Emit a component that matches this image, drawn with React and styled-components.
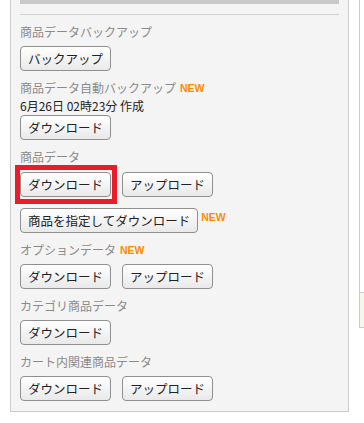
import React from 'react';
import styled, { createGlobalStyle } from 'styled-components';

const GlobalStyle = createGlobalStyle`
  body {
    margin: 0;
    background: #fff;
    font-family: "Noto Sans CJK JP", "Noto Sans", sans-serif;
  }
`;

const Page = styled.div`
  display: flex;
  align-items: flex-start;
  height: 423px;
  overflow: hidden;
`;

const Panel = styled.div`
  margin-left: 10px;
  width: 319px;
  background: #f4f4f4;
  border: 1px solid #cbcbcb;
  border-top: none;
  padding: 0 9px 10px;
`;

const TopBar = styled.div`
  height: 4px;
  background: #c9c9c9;
`;

const Rule = styled.div`
  height: 1px;
  background: #cfcfcf;
  margin-top: 10px;
`;

const Section = styled.div`
  margin-top: 8px;
  margin-bottom: ${(p) => p.$extra || '0'};
`;

const Label = styled.div`
  font-size: 12px;
  line-height: 18px;
  color: #8a8a8a;
  display: flex;
  align-items: center;
  gap: 4px;
`;

const New = styled.span`
  font-family: "Liberation Sans Narrow", "Liberation Sans", Arial, sans-serif;
  font-weight: bold;
  font-size: 10.5px;
  color: #ff8a00;
  line-height: 1;
`;

const Info = styled.div`
  font-size: 12px;
  line-height: 18px;
  color: #222;
`;

const Row = styled.div`
  display: flex;
  align-items: flex-start;
  gap: 11px;
  margin-top: ${(p) => p.$gap || '5px'};
`;

const Button = styled.button`
  height: 25px;
  padding: 0 7px;
  font-family: "Noto Sans CJK JP", sans-serif;
  font-size: 12.5px;
  line-height: 23px;
  color: #222;
  border: 1px solid #8f8f8f;
  border-radius: 4px;
  background: linear-gradient(#ffffff, #e9e9e9);
  cursor: pointer;
`;

const Marked = styled.span`
  position: relative;
  display: inline-flex;

  &::after {
    content: '';
    position: absolute;
    left: -5px;
    top: -7px;
    right: -6px;
    bottom: -7px;
    border: 5px solid #ea1c2a;
    pointer-events: none;
  }
`;

const WithBadge = styled.span`
  display: inline-flex;
  align-items: flex-start;
  gap: 3px;
`;

const BadgeNew = styled(New)`
  margin-top: 4px;
`;

const Side = styled.div`
  margin-left: 10px;
  flex: 1;
  height: 328px;
  border-left: 1px solid #cbcbcb;
  display: flex;
  flex-direction: column;
  justify-content: flex-end;
`;

const SideBox = styled.div`
  height: 34px;
  background: #f6f6e9;
  border-top: 1px solid #cbcbcb;
  border-bottom: 1px solid #cbcbcb;
`;

export default function App() {
  return (
    <Page>
      <GlobalStyle />
      <Panel>
        <TopBar />
        <Rule />
        <Section>
          <Label>商品データバックアップ</Label>
          <Row>
            <Button>バックアップ</Button>
          </Row>
        </Section>
        <Section>
          <Label>
            商品データ自動バックアップ<New>NEW</New>
          </Label>
          <Info>6月26日 02時23分 作成</Info>
          <Row $gap="0px">
            <Button>ダウンロード</Button>
          </Row>
        </Section>
        <Section $extra="2px">
          <Label>商品データ</Label>
          <Row $gap="6px">
            <Marked>
              <Button>ダウンロード</Button>
            </Marked>
            <Button>アップロード</Button>
          </Row>
          <Row $gap="11px">
            <WithBadge>
              <Button>商品を指定してダウンロード</Button>
              <BadgeNew>NEW</BadgeNew>
            </WithBadge>
          </Row>
        </Section>
        <Section>
          <Label>
            オプションデータ<New>NEW</New>
          </Label>
          <Row>
            <Button>ダウンロード</Button>
            <Button>アップロード</Button>
          </Row>
        </Section>
        <Section>
          <Label>カテゴリ商品データ</Label>
          <Row>
            <Button>ダウンロード</Button>
          </Row>
        </Section>
        <Section>
          <Label>カート内関連商品データ</Label>
          <Row>
            <Button>ダウンロード</Button>
            <Button>アップロード</Button>
          </Row>
        </Section>
      </Panel>
      <Side>
        <SideBox />
      </Side>
    </Page>
  );
}
